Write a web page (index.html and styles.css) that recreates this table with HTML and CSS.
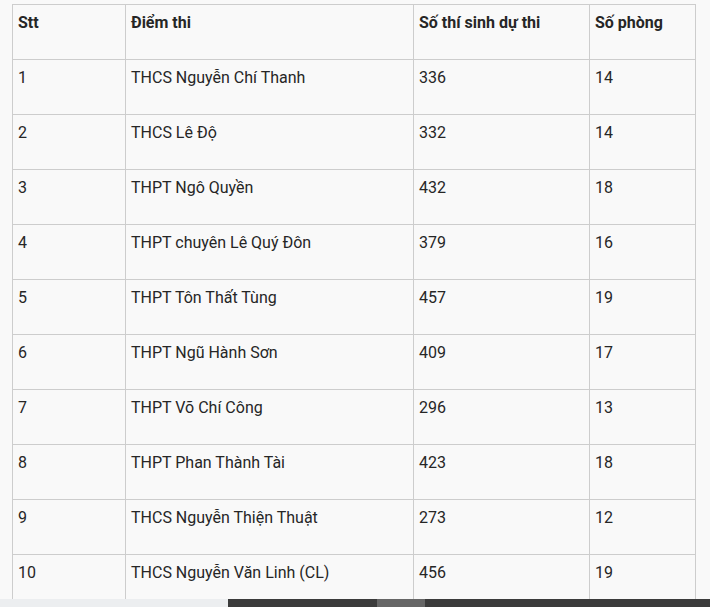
FILE: index.html
```html
<!DOCTYPE html>
<html lang="vi">
<head>
<meta charset="utf-8">
<title>Điểm thi</title>
<link rel="stylesheet" href="styles.css">
</head>
<body>
<table class="exam-table">
  <colgroup>
    <col class="c1"><col class="c2"><col class="c3"><col class="c4">
  </colgroup>
  <thead>
    <tr><th>Stt</th><th>Điểm thi</th><th>Số thí sinh dự thi</th><th>Số phòng</th></tr>
  </thead>
  <tbody>
    <tr><td>1</td><td>THCS Nguyễn Chí Thanh</td><td>336</td><td>14</td></tr>
    <tr><td>2</td><td>THCS Lê Độ</td><td>332</td><td>14</td></tr>
    <tr><td>3</td><td>THPT Ngô Quyền</td><td>432</td><td>18</td></tr>
    <tr><td>4</td><td>THPT chuyên Lê Quý Đôn</td><td>379</td><td>16</td></tr>
    <tr><td>5</td><td>THPT Tôn Thất Tùng</td><td>457</td><td>19</td></tr>
    <tr><td>6</td><td>THPT Ngũ Hành Sơn</td><td>409</td><td>17</td></tr>
    <tr><td>7</td><td>THPT Võ Chí Công</td><td>296</td><td>13</td></tr>
    <tr><td>8</td><td>THPT Phan Thành Tài</td><td>423</td><td>18</td></tr>
    <tr><td>9</td><td>THCS Nguyễn Thiện Thuật</td><td>273</td><td>12</td></tr>
    <tr><td>10</td><td>THCS Nguyễn Văn Linh (CL)</td><td>456</td><td>19</td></tr>
  </tbody>
</table>
<div class="hscroll">
  <div class="track-light"></div>
  <div class="track-dark"><div class="thumb"></div></div>
</div>
</body>
</html>
```
FILE: styles.css
```css
html {
  overflow: hidden;
  background: #f9f9f9;
}
body {
  margin: 4px 0 0 12px;
  font-family: Roboto, "Liberation Sans", sans-serif;
  font-size: 16px;
  line-height: 24px;
  color: #262626;
  background: #f9f9f9;
}
.exam-table {
  border-collapse: collapse;
  table-layout: fixed;
  width: 683px;
}
.c1 { width: 113px; }
.c2 { width: 288px; }
.c3 { width: 176px; }
.c4 { width: 106px; }
.exam-table th,
.exam-table td {
  border: 1px solid #cdcdcd;
  padding: 6px 5px 24px 5px;
  text-align: left;
  vertical-align: top;
  height: 24px;
}
.exam-table th {
  font-weight: 700;
}
.hscroll {
  position: absolute;
  left: 0;
  top: 599px;
  width: 710px;
  height: 8px;
  display: flex;
}
.track-light {
  width: 228px;
  background: #eceef0;
}
.track-dark {
  flex: 1;
  background: #3b3b3b;
  padding-left: 149px;
}
.thumb {
  width: 48px;
  height: 100%;
  background: #666;
}
```
